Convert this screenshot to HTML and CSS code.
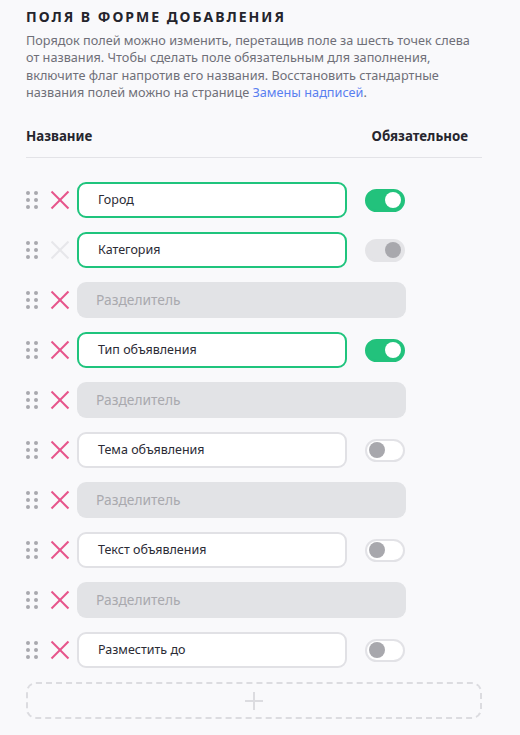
FILE: index.html
```html
<!DOCTYPE html>
<html lang="ru">
<head>
<meta charset="utf-8">
<link rel="stylesheet" href="styles.css">
</head>
<body>
<div class="page">
  <h1 class="title">Поля в форме добавления</h1>
  <p class="desc">Порядок полей можно изменить, перетащив поле за шесть точек слева<br>от названия. Чтобы сделать поле обязательным для заполнения,<br>включите флаг напротив его названия. Восстановить стандартные<br>названия полей можно на странице <a class="link" href="#">Замены надписей</a>.</p>

  <div class="head">
    <span>Название</span>
    <span>Обязательное</span>
  </div>

  <div class="list">
    <div class="row">
      <span class="grip"><i></i><i></i><i></i><i></i><i></i><i></i></span>
      <span class="del"></span>
      <div class="field active">Город</div>
      <span class="toggle on"></span>
    </div>
    <div class="row">
      <span class="grip"><i></i><i></i><i></i><i></i><i></i><i></i></span>
      <span class="del disabled"></span>
      <div class="field active">Категория</div>
      <span class="toggle locked"></span>
    </div>
    <div class="row">
      <span class="grip"><i></i><i></i><i></i><i></i><i></i><i></i></span>
      <span class="del"></span>
      <div class="divider">Разделитель</div>
    </div>
    <div class="row">
      <span class="grip"><i></i><i></i><i></i><i></i><i></i><i></i></span>
      <span class="del"></span>
      <div class="field active">Тип объявления</div>
      <span class="toggle on"></span>
    </div>
    <div class="row">
      <span class="grip"><i></i><i></i><i></i><i></i><i></i><i></i></span>
      <span class="del"></span>
      <div class="divider">Разделитель</div>
    </div>
    <div class="row">
      <span class="grip"><i></i><i></i><i></i><i></i><i></i><i></i></span>
      <span class="del"></span>
      <div class="field">Тема объявления</div>
      <span class="toggle"></span>
    </div>
    <div class="row">
      <span class="grip"><i></i><i></i><i></i><i></i><i></i><i></i></span>
      <span class="del"></span>
      <div class="divider">Разделитель</div>
    </div>
    <div class="row">
      <span class="grip"><i></i><i></i><i></i><i></i><i></i><i></i></span>
      <span class="del"></span>
      <div class="field">Текст объявления</div>
      <span class="toggle"></span>
    </div>
    <div class="row">
      <span class="grip"><i></i><i></i><i></i><i></i><i></i><i></i></span>
      <span class="del"></span>
      <div class="divider">Разделитель</div>
    </div>
    <div class="row">
      <span class="grip"><i></i><i></i><i></i><i></i><i></i><i></i></span>
      <span class="del"></span>
      <div class="field">Разместить до</div>
      <span class="toggle"></span>
    </div>
  </div>

  <div class="add"><span class="plus"></span></div>
</div>
</body>
</html>
```

FILE: styles.css
```css
html, body {
  margin: 0;
  padding: 0;
  background: #f9f9fb;
}
body {
  font-family: "Noto Sans", "Open Sans", sans-serif;
  color: #2b2b35;
}
.page {
  width: 456px;
  padding: 8px 0 0 26px;
}
.title {
  margin: 0;
  font-size: 14px;
  line-height: 18px;
  font-weight: 700;
  text-transform: uppercase;
  letter-spacing: 2px;
  color: #24242c;
}
.desc {
  margin: 6px 0 0;
  font-size: 12.7px;
  line-height: 17.3px;
  color: #6f6f78;
}
.link {
  color: #5a80f0;
  text-decoration: none;
}
.head {
  display: flex;
  justify-content: space-between;
  margin-top: 26px;
  padding: 0 14px 12px 0;
  border-bottom: 1px solid #e3e3e7;
  font-size: 13.3px;
  line-height: 18px;
  font-weight: 700;
  color: #26262e;
}
.list {
  display: flex;
  flex-direction: column;
  gap: 14px;
  margin-top: 24px;
}
.row {
  display: flex;
  align-items: center;
  height: 36px;
}
.grip {
  display: grid;
  grid-template-columns: 4px 4px;
  column-gap: 3.5px;
  row-gap: 3px;
  width: 11px;
}
.grip i {
  width: 4px;
  height: 4px;
  border-radius: 50%;
  background: #a9a9ae;
}
.del {
  position: relative;
  width: 18px;
  height: 18px;
  margin-left: 14px;
}
.del::before, .del::after {
  content: "";
  position: absolute;
  left: -3px;
  top: 8px;
  width: 24px;
  height: 2px;
  background: #e6548a;
  transform: rotate(45deg);
}
.del::after {
  transform: rotate(-45deg);
}
.del.disabled::before, .del.disabled::after {
  background: #e7e7ea;
}
.field {
  box-sizing: border-box;
  width: 270px;
  height: 36px;
  margin-left: 8px;
  padding-left: 19px;
  border: 2px solid #e1e1e5;
  border-radius: 9px;
  background: #fff;
  font-size: 12.5px;
  line-height: 32px;
  color: #2b2b35;
}
.field.active {
  border-color: #1fc47d;
}
.divider {
  box-sizing: border-box;
  width: 329px;
  height: 36px;
  margin-left: 8px;
  padding-left: 19px;
  border-radius: 9px;
  background: #e2e3e6;
  font-size: 13.8px;
  line-height: 36px;
  color: #a9a9ae;
}
.toggle {
  position: relative;
  box-sizing: border-box;
  width: 40px;
  height: 23px;
  margin-left: 18px;
  border-radius: 12px;
  border: 2px solid #e2e2e6;
  background: #fff;
}
.toggle::after {
  content: "";
  position: absolute;
  top: 1.5px;
  left: 2px;
  width: 16px;
  height: 16px;
  border-radius: 50%;
  background: #a8a8ad;
}
.toggle.on {
  border-color: #22c27c;
  background: #22c27c;
}
.toggle.on::after {
  left: auto;
  right: 2px;
  background: #fff;
}
.toggle.locked {
  border-color: #e4e4e7;
  background: #e4e4e7;
}
.toggle.locked::after {
  left: auto;
  right: 2px;
  background: #a8a8ad;
}
.add {
  box-sizing: border-box;
  display: flex;
  align-items: center;
  justify-content: center;
  width: 456px;
  height: 37px;
  margin-top: 14px;
  border: 2px dashed #dcdce0;
  border-radius: 10px;
}
.plus {
  position: relative;
  width: 18px;
  height: 18px;
}
.plus::before, .plus::after {
  content: "";
  position: absolute;
  background: #dcdce0;
}
.plus::before {
  left: 8px;
  top: 0;
  width: 2px;
  height: 18px;
}
.plus::after {
  top: 8px;
  left: 0;
  width: 18px;
  height: 2px;
}
```
